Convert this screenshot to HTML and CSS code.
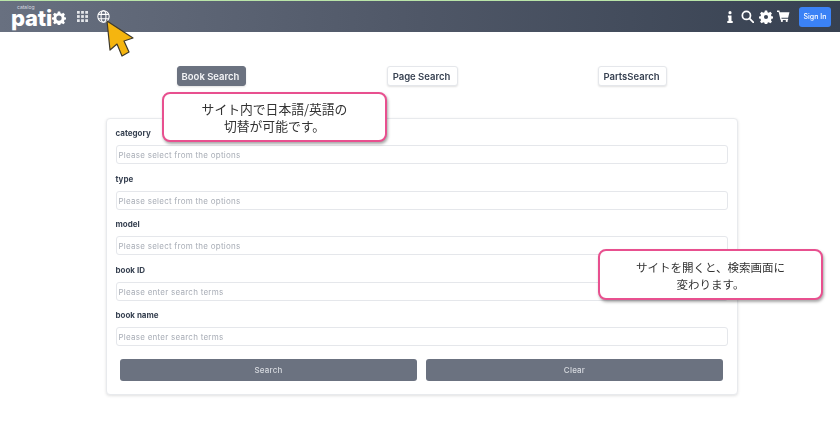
FILE: index.html
```html
<!DOCTYPE html>
<html lang="ja">
<head>
<meta charset="utf-8">
<title>Catalog Patio</title>
<link rel="stylesheet" href="styles.css">
</head>
<body>
<header class="nav">
  <div class="nav-left">
    <div class="logo"><span class="logo-small">catalog</span><span class="logo-main">pati<svg class="logo-gear" viewBox="0 0 24 24"><path fill="#fff" fill-rule="evenodd" d="M10 1h4l.6 3 2.2.9 2.600-1.700 2.800 2.800-1.700 2.600.9 2.200 3 .6v3.200l-3 .6-.9 2.200 1.700 2.600-2.800 2.800-2.600-1.700-2.200.9-.6 3h-4l-.6-3-2.200-.9-2.600 1.700-2.800-2.800 1.700-2.600-.9-2.200-3-.6v-3.200l3-.6.9-2.200-1.700-2.600 2.800-2.800 2.600 1.700 2.200-.9zM12 7.500a4.500 4.500 0 1 0 0 9 4.500 4.500 0 0 0 0-9z"/></svg></span></div>
    <svg class="icon-grid" viewBox="0 0 12 12" fill="#e5e7eb"><rect x="0" y="0" width="3" height="3"/><rect x="4.500" y="0" width="3" height="3"/><rect x="9" y="0" width="3" height="3"/><rect x="0" y="4.500" width="3" height="3"/><rect x="4.500" y="4.500" width="3" height="3"/><rect x="9" y="4.500" width="3" height="3"/><rect x="0" y="9" width="3" height="3"/><rect x="4.500" y="9" width="3" height="3"/><rect x="9" y="9" width="3" height="3"/></svg>
    <svg class="icon-globe" viewBox="0 0 24 24" fill="none" stroke="#fff" stroke-width="2"><circle cx="12" cy="12" r="10.500"/><ellipse cx="12" cy="12" rx="4.500" ry="10.500"/><path d="M2 8h20M2 16h20"/></svg>
  </div>
  <div class="nav-right">
    <svg class="icon-info" viewBox="0 0 10 20" fill="#fff"><circle cx="5" cy="2.800" r="2.600"/><path d="M1.500 7.500h6v9h2V20H.5v-3.500h2v-5.500h-1z"/></svg>
    <svg class="icon-search" viewBox="0 0 24 24" fill="none" stroke="#fff" stroke-width="3.200"><circle cx="10" cy="10" r="7.500"/><path d="M15.500 15.500 23 23" stroke-linecap="round"/></svg>
    <svg class="icon-gear" viewBox="0 0 24 24"><path fill="#fff" fill-rule="evenodd" d="M10 1h4l.6 3 2.200.9 2.600-1.700 2.800 2.800-1.700 2.600.9 2.200 3 .6v3.200l-3 .6-.9 2.200 1.700 2.600-2.800 2.800-2.600-1.700-2.200.9-.6 3h-4l-.6-3-2.200-.9-2.600 1.700-2.800-2.800 1.700-2.600-.9-2.200-3-.6v-3.200l3-.6.9-2.200-1.700-2.600 2.800-2.800 2.600 1.700 2.200-.9zM12 8.500a3.500 3.500 0 1 0 0 7 3.500 3.500 0 0 0 0-7z"/></svg>
    <svg class="icon-cart" viewBox="0 0 24 22" fill="#fff"><path d="M0 1h4.500l.8 3H23l-2.500 10H8l.5 2h12v2.500H6.500L3 3.500H0z"/><circle cx="9" cy="20" r="2"/><circle cx="18" cy="20" r="2"/></svg>
    <button class="signin">Sign In</button>
  </div>
</header>

<main class="page">
  <div class="tabs">
    <button class="tab tab-active">Book Search</button>
    <button class="tab">Page Search</button>
    <button class="tab">PartsSearch</button>
  </div>

  <form class="card">
    <div class="field"><label class="label">category</label><div class="input">Please select from the options</div></div>
    <div class="field"><label class="label">type</label><div class="input">Please select from the options</div></div>
    <div class="field"><label class="label">model</label><div class="input">Please select from the options</div></div>
    <div class="field"><label class="label">book ID</label><div class="input">Please enter search terms</div></div>
    <div class="field"><label class="label">book name</label><div class="input">Please enter search terms</div></div>
    <div class="actions">
      <button type="button" class="action">Search</button>
      <button type="button" class="action">Clear</button>
    </div>
  </form>
</main>

<div class="callout callout-lang">サイト内で日本語/英語の<br>切替が可能です。</div>
<div class="callout callout-open">サイトを開くと、検索画面に<br>変わります。</div>

<svg class="cursor" viewBox="0 0 30 38"><path d="M1 1 L27 18 L18 21 L23 32 L16 36 L11 24 L4 30 Z" fill="#f5b50f" stroke="#3f3a2c" stroke-width="1.200" stroke-linejoin="round"/></svg>
</body>
</html>
```
FILE: styles.css
```css
* { box-sizing: border-box; }
html, body { margin: 0; padding: 0; }
body {
  width: 840px;
  height: 424px;
  overflow: hidden;
  position: relative;
  background: #fff;
  font-family: Inter, "Noto Sans CJK JP", sans-serif;
  color: #374151;
  filter: blur(.35px);
}
.nav {
  height: 32px;
  border-top: 1px solid #b9e4a8;
  background: linear-gradient(90deg, #687080 0%, #4f5767 50%, #374151 100%);
  display: flex;
  align-items: center;
  justify-content: space-between;
  padding: 0 9px 0 11px;
}
.nav-left, .nav-right { display: flex; align-items: center; }
.logo { display: flex; flex-direction: column; align-items: flex-start; color: #fff; line-height: 1; width: 56px; }
.logo-small { font-size: 5px; color: #d8dbe0; height: 4px; margin: -2px 0 0 6px; }
.logo-main { font-family: Inter, sans-serif; font-weight: 800; font-size: 22px; letter-spacing: -.2px; height: 18px; line-height: 16px; display: flex; align-items: center; }
.logo-gear { width: 14px; height: 14px; margin-left: 0; }
.icon-grid { width: 11px; height: 11px; margin-left: 10px; }
.icon-globe { width: 13px; height: 13px; margin-left: 9px; }
.icon-info { width: 6px; height: 14px; margin-right: 8px; }
.icon-search { width: 13px; height: 13px; margin-right: 5px; }
.icon-gear { width: 14px; height: 14px; margin-right: 4px; }
.icon-cart { width: 13px; height: 12px; margin-right: 9px; margin-top: -2px; }
.signin {
  width: 32px; height: 20px;
  border: 0; border-radius: 3px; padding: 0;
  background: #3b82f6; color: #fff;
  font: 500 7px Inter, sans-serif;
}
.page { display: block; }
.tabs { position: relative; height: 86px; display: flex; }
.tab {
  position: absolute;
  top: 34px;
  height: 20px;
  border: 1px solid #e5e7eb;
  border-radius: 3px;
  background: #fff;
  color: #374151;
  padding: 0 2px 0 0;
  white-space: nowrap;
  font: 600 9.500px Inter, sans-serif;
  box-shadow: 0 1px 2px rgba(0,0,0,.12);
}
.tab:nth-child(1) { left: 177px; width: 69px; }
.tab:nth-child(2) { left: 387px; width: 71px; }
.tab:nth-child(3) { left: 598px; width: 69px; }
.tab-active { background: #6b7280; border-color: #6b7280; color: #f3f4f6; }
.card {
  margin-left: 106px;
  width: 632px;
  height: 277px;
  border: 1px solid #e8eaed;
  border-radius: 4px;
  box-shadow: 0 1px 3px rgba(0,0,0,.12);
  padding: 9px 9px 0 8.500px;
  background: #fff;
}
.field { height: 45.500px; }
.label { display: block; height: 17px; font-size: 8px; font-weight: 700; line-height: 10px; color: #374151; }
.input {
  height: 19px;
  border: 1px solid #e5e7eb;
  border-radius: 3px;
  padding: 0 2px;
  font-size: 8px;
  line-height: 18px;
  letter-spacing: .25px;
  color: #a8adb6;
  background: #fff;
}
.actions { display: flex; gap: 9px; padding: 3px 5px 0 4.500px; }
.action {
  flex: 1;
  height: 22px;
  border: 0;
  border-radius: 3px;
  background: #6b7280;
  color: #d8dbe0;
  font: 500 8px Inter, sans-serif;
  letter-spacing: .2px;
}
.callout {
  position: absolute;
  background: #fff;
  border: 2px solid #e8508f;
  border-radius: 8px;
  box-shadow: 1px 2px 3px rgba(0,0,0,.35);
  color: #333;
  line-height: 17px;
  text-align: center;
  font-family: "Noto Sans CJK JP", sans-serif;
  font-size: 12.800px;
}
.callout-lang { left: 162px; top: 92px; width: 225px; height: 50px; padding-top: 6px; }
.callout-open { left: 598px; top: 249px; width: 225px; height: 51px; padding-top: 8px; font-size: 11.500px; }
.cursor { position: absolute; left: 106px; top: 20px; width: 30px; height: 38px; }
```
